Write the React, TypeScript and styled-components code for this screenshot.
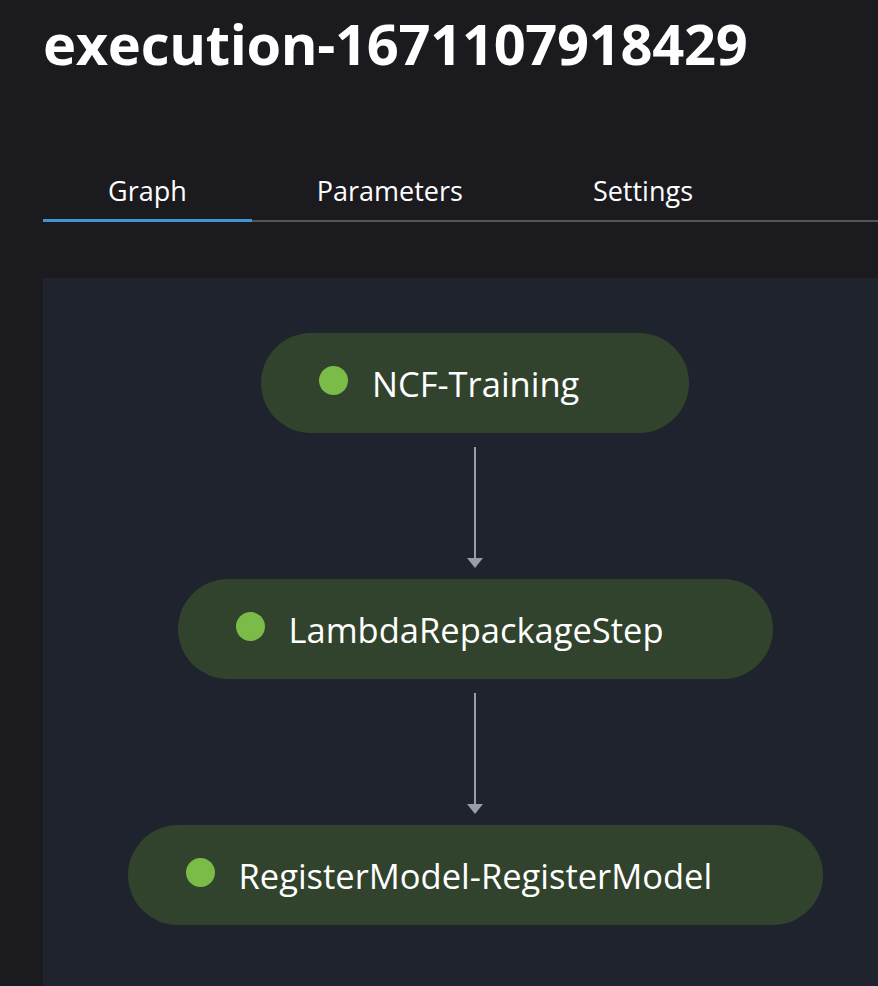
import React from 'react';
import styled, { createGlobalStyle } from 'styled-components';

const GlobalStyle = createGlobalStyle`
  html, body {
    margin: 0;
    padding: 0;
    background: #1b1a1f;
    font-family: 'Open Sans', 'Noto Sans', sans-serif;
    color: #ffffff;
  }
`;

const Page = styled.div`
  min-height: 100vh;
  padding-left: 43px;
  overflow: hidden;
`;

const Title = styled.h1`
  margin: 0;
  padding-top: 10px;
  font-size: 56px;
  line-height: 66px;
  font-weight: 700;
  letter-spacing: -0.3px;
  color: #ffffff;
`;

const TabList = styled.div`
  display: flex;
  margin-top: 97px;
  border-bottom: 2px solid #545457;
`;

const Tab = styled.div<{ $active?: boolean }>`
  padding: 0 65px 10px;
  margin-bottom: -2px;
  font-size: 27px;
  line-height: 36px;
  font-weight: 500;
  color: #ffffff;
  border-bottom: 3px solid ${({ $active }) => ($active ? '#3f95d4' : 'transparent')};
`;

const Canvas = styled.div`
  margin-top: 56px;
  background: #1e232d;
  height: 708px;
  box-sizing: border-box;
  padding: 55px 0 0 29px;
  display: flex;
  flex-direction: column;
  align-items: center;
`;

const Node = styled.div<{ $width: number }>`
  width: ${({ $width }) => $width}px;
  height: 100px;
  box-sizing: border-box;
  padding-left: 58px;
  border-radius: 50px;
  background: #31432c;
  display: flex;
  align-items: center;
  gap: 24px;
  flex-shrink: 0;
`;

const StatusDot = styled.span`
  width: 29px;
  height: 29px;
  margin-top: -6px;
  border-radius: 50%;
  background: #7bbb47;
  flex-shrink: 0;
`;

const NodeLabel = styled.span`
  font-size: 34.5px;
  font-weight: 500;
  white-space: nowrap;
  color: #ffffff;
`;

const Edge = styled.svg`
  display: block;
  margin: 14px 0 11px;
  flex-shrink: 0;
`;

const Arrow = () => (
  <Edge width="16" height="121" viewBox="0 0 16 121">
    <line x1="8" y1="0" x2="8" y2="112" stroke="#9d9ca4" strokeWidth="2" />
    <polygon points="0,111 16,111 8,121" fill="#9d9ca4" />
  </Edge>
);

const steps = [
  { name: 'NCF-Training', width: 428 },
  { name: 'LambdaRepackageStep', width: 595 },
  { name: 'RegisterModel-RegisterModel', width: 695 },
];

const App: React.FC = () => {
  return (
    <>
      <GlobalStyle />
      <Page>
        <Title>execution-1671107918429</Title>
        <TabList>
          <Tab $active>Graph</Tab>
          <Tab>Parameters</Tab>
          <Tab>Settings</Tab>
        </TabList>
        <Canvas>
          {steps.map((step, i) => (
            <React.Fragment key={step.name}>
              {i > 0 && <Arrow />}
              <Node $width={step.width}>
                <StatusDot />
                <NodeLabel>{step.name}</NodeLabel>
              </Node>
            </React.Fragment>
          ))}
        </Canvas>
      </Page>
    </>
  );
};

export default App;
